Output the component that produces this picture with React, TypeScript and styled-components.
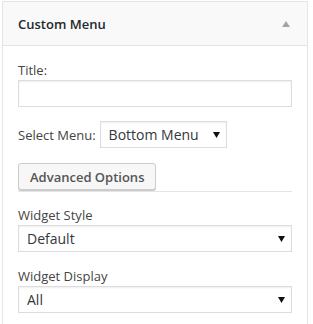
import React from 'react';
import styled, { createGlobalStyle } from 'styled-components';

const GlobalStyle = createGlobalStyle`
  body {
    margin: 0;
    background: #fff;
    font-family: 'Open Sans', 'Liberation Sans', sans-serif;
    font-size: 13px;
    color: #444;
  }
`;

const Widget = styled.div`
  box-sizing: border-box;
  width: 306px;
  margin: 1px 0 0 2px;
  border: 1px solid #e5e5e5;
  background: #fff;
  min-height: 330px;
`;

const WidgetTop = styled.div`
  display: flex;
  align-items: center;
  justify-content: space-between;
  height: 43px;
  padding: 0 17px 0 15px;
  background: #f9f9f9;
  border-bottom: 1px solid #e5e5e5;
`;

const WidgetTitle = styled.h3`
  margin: 0;
  font-size: 13px;
  font-weight: 600;
  color: #23282d;
`;

const Toggle = styled.svg`
  width: 8px;
  height: 6px;
  margin-top: 1px;
`;

const WidgetInside = styled.div`
  display: flex;
  flex-direction: column;
  padding: 14px 15px 0 15px;
`;

const Field = styled.div<{ $gap?: number }>`
  display: flex;
  flex-direction: column;
  margin-top: ${(p) => p.$gap ?? 0}px;
`;

const InlineField = styled.div<{ $gap?: number }>`
  display: flex;
  align-items: center;
  gap: 4px;
  margin-top: ${(p) => p.$gap ?? 0}px;
`;

const Label = styled.label`
  line-height: 20px;
  color: #444;
`;

const TextInput = styled.input`
  box-sizing: border-box;
  width: 100%;
  height: 27px;
  margin: 0;
  border: 1px solid #ddd;
  box-shadow: inset 0 1px 2px rgba(0, 0, 0, 0.07);
  background: #fff;
  outline: none;
`;

const SelectWrap = styled.div<{ $width?: string }>`
  position: relative;
  box-sizing: border-box;
  width: ${(p) => p.$width ?? '100%'};
  height: 27px;
`;

const Select = styled.select`
  box-sizing: border-box;
  width: 100%;
  height: 100%;
  margin: 0;
  padding: 0 24px 0 8px;
  appearance: none;
  -webkit-appearance: none;
  border: 1px solid #ddd;
  border-radius: 0;
  box-shadow: inset 0 1px 2px rgba(0, 0, 0, 0.07);
  background: #fff;
  font-family: 'Open Sans', 'Liberation Sans', sans-serif;
  font-size: 14px;
  color: #32373c;
  outline: none;
`;

const Caret = styled.svg`
  position: absolute;
  right: 7px;
  top: 11px;
  width: 7px;
  height: 6px;
  pointer-events: none;
`;

const ButtonBar = styled.div`
  display: flex;
  margin-top: 15px;
  border-bottom: 1px solid #e5e5e5;
`;

const Button = styled.button`
  height: 27px;
  margin-bottom: 1px;
  padding: 0 11px;
  border: 1px solid #ccc;
  border-radius: 3px;
  background: #f7f7f7;
  box-shadow: 0 1px 0 #ccc;
  font-family: 'Open Sans', 'Liberation Sans', sans-serif;
  font-size: 13px;
  font-weight: 600;
  color: #555;
  cursor: pointer;
`;

const Dropdown = ({ value, width }: { value: string; width?: string }) => (
  <SelectWrap $width={width}>
    <Select defaultValue={value}>
      <option>{value}</option>
    </Select>
    <Caret viewBox="0 0 7 6">
      <polygon points="0,0 7,0 3.5,6" fill="#111" />
    </Caret>
  </SelectWrap>
);

export default function App() {
  return (
    <>
      <GlobalStyle />
      <Widget>
        <WidgetTop>
          <WidgetTitle>Custom Menu</WidgetTitle>
          <Toggle viewBox="0 0 8 6">
            <polygon points="4,0 8,6 0,6" fill="#a0a5aa" />
          </Toggle>
        </WidgetTop>
        <WidgetInside>
          <Field>
            <Label>Title:</Label>
            <TextInput type="text" />
          </Field>
          <InlineField $gap={14}>
            <Label>Select Menu:</Label>
            <Dropdown value="Bottom Menu" width="127px" />
          </InlineField>
          <ButtonBar>
            <Button>Advanced Options</Button>
          </ButtonBar>
          <Field $gap={13}>
            <Label>Widget Style</Label>
            <Dropdown value="Default" />
          </Field>
          <Field $gap={14}>
            <Label>Widget Display</Label>
            <Dropdown value="All" />
          </Field>
        </WidgetInside>
      </Widget>
    </>
  );
}
